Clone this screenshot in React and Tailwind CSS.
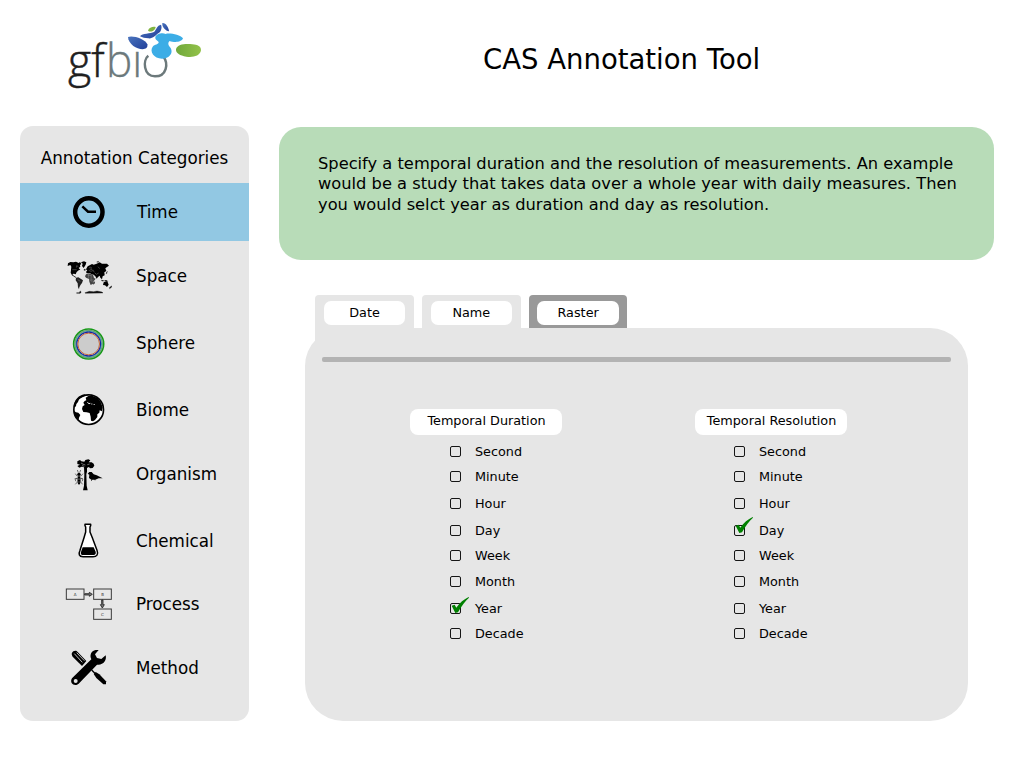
import React from "react";

function Logo() {
  return (
    <svg className="h-20 w-[150px] shrink-0" viewBox="0 0 450 240" aria-label="gfbio">
      <defs>
        <linearGradient id="navy" x1="0" y1="0" x2="1" y2="1">
          <stop offset="0" stopColor="#4a74bd" />
          <stop offset="1" stopColor="#22409a" />
        </linearGradient>
        <linearGradient id="leaf" x1="0" y1="0" x2="1" y2="0">
          <stop offset="0" stopColor="#70a83b" />
          <stop offset="1" stopColor="#93c24a" />
        </linearGradient>
      </defs>
      <g fontFamily="'Open Sans', sans-serif" fontSize="138" fontWeight="300">
        <text x="24" y="186" fill="#1f1f1f" stroke="#1f1f1f" strokeWidth="1.5" textLength="110" lengthAdjust="spacingAndGlyphs">gf</text>
        <text x="138" y="186" fill="#6c797b" stroke="#6c797b" strokeWidth="1" textLength="109" lengthAdjust="spacingAndGlyphs">bı</text>
      </g>
      <path d="M265 122C248 135 250 184 285 184C321 184 325 145 311 126" fill="none" stroke="#6c797b" strokeWidth="7.5" />
      <path d="M204 66C218 60 256 72 262 88C266 108 236 105 220 93C211 86 204 76 204 66Z" fill="url(#navy)" />
      <path d="M264 47C267 36 280 34 287 36C286 47 272 54 264 47Z" fill="#80b440" />
      <path d="M240 64C246 54 272 57 282 51C289 44 291 31 303 29C307 38 303 50 296 54C286 61 278 72 265 70C255 69 247 68 240 64Z" fill="url(#navy)" />
      <path d="M307 24C316 22 326 36 327 49C317 48 305 36 307 24Z" fill="url(#navy)" />
      <path d="M286 66C289 57 306 52 317 57C329 53 361 60 369 70C364 84 340 82 329 78C322 84 325 91 332 99C341 115 327 131 306 131C281 130 268 109 278 95C284 87 296 90 296 81C293 76 285 76 286 66Z" fill="#3cade6" />
      <path d="M348 103C352 87 377 86 397 88C413 89 424 95 423 106C420 124 397 128 379 125C360 122 347 115 348 103Z" fill="url(#leaf)" />
    </svg>
  );
}

function ClockIcon() {
  return (
    <svg className="h-[58px] w-[60px] shrink-0" viewBox="0 -6 180 174">
      <circle cx="83.5" cy="81" r="41" fill="none" stroke="#000" strokeWidth="13.5" />
      <path d="M64 64L81 80H105" fill="none" stroke="#000" strokeWidth="7.5" />
    </svg>
  );
}

function WorldIcon() {
  return (
    <svg className="h-[58px] w-[60px] shrink-0" viewBox="0 -15 180 174">
      <path d="M24 34L31 30L40 31L48 29L56 33L60 30L64 36L60 39L61 44L56 48L61 53L56 55L50 60L47 67L42 65L37 66L41 71L48 75L47 77L36 70L32 62L33 53L34 44L31 39L23 42Z" />
      <path d="M63 31L72 28L79 31L77 38L71 48L66 42L68 35Z" />
      <path d="M48 77L55 76L62 80L69 85L66 93L62 98L58 106L57 112L54 106L53 94L47 85Z" fill="#222" />
      <path d="M78 52L83 43L89 40L96 36L101 38L110 35L119 31L126 35L141 35L147 41L141 45L136 49L139 57L133 61L134 70L128 73L126 82L121 77L119 71L114 75L110 80L106 73L101 68L95 67L89 63L80 64L78 59L82 56Z" />
      <path d="M78 67L87 64L99 68L102 78L107 80L101 88L99 95L92 99L88 89L87 81L78 77L75 73Z" fill="#444" />
      <path d="M131 91L139 87L142 88L146 98L141 105L135 100L129 99ZM123 83L133 86L138 84L145 88L137 87L126 88Z" />
      <path d="M75 122L88 118L101 119L111 117L126 120L129 123L76 124ZM59 119L62 117L63 123L59 123ZM50 122H60V124H50ZM148 107L154 102L156 104L149 110ZM101 91L104 89L103 95L100 97ZM138 64L142 58L140 65ZM72 52H76V55H72ZM110 30L116 28L115 31Z" fill="#111" stroke="#111" strokeWidth="1" />
      <path d="M87 48L92 45L95 48L91 52L97 53M86 55L93 58L100 55L102 60M82 69L94 71M86 65L85 80M94 68L93 84L101 84M89 83L98 90M104 62L109 67L116 63M114 44L119 50M55 44L50 41L49 47M37 53H50M53 83L61 88" fill="none" stroke="#999" strokeWidth="1.2" />
    </svg>
  );
}

function SphereIcon() {
  return (
    <svg className="h-[58px] w-[60px] shrink-0" viewBox="0 -18 180 174">
      <circle cx="86" cy="72" r="45" fill="#ccc" stroke="#169a16" strokeWidth="5" />
      <circle cx="86" cy="72" r="41" fill="none" stroke="#68a477" strokeWidth="4" />
      <circle cx="86" cy="72" r="38" fill="none" stroke="#2a9aa8" strokeWidth="3" />
      <circle cx="86" cy="72" r="35.5" fill="none" stroke="#1d1da4" strokeWidth="3.5" />
      <circle cx="86" cy="72" r="32.5" fill="#ccc" stroke="#c96b38" strokeWidth="3" />
    </svg>
  );
}

function GlobeIcon() {
  return (
    <svg className="h-[58px] w-[60px] shrink-0" viewBox="0 -12 180 174">
      <circle cx="86" cy="74" r="44" fill="#fff" />
      <path d="M41 68C41 45 57 29 76 28L73 34L63 38L57 42L54 51L49 57L48 64ZM41 77L48 82L55 83L61 90L57 98L56 105C47 98 42 88 41 77Z" />
      <path d="M77 38L85 33L98 33L113 39L122 51L128 67L126 79L119 76L118 83L112 88L112 96L105 105L99 109L93 107L92 95L89 84L80 82L70 81L66 72L68 64L74 60L70 53L74 48L79 46Z" />
      <path d="M82 52L87 56L91 55M94 57H97M101 57L104 60" fill="none" stroke="#eee" strokeWidth="3" />
      <circle cx="86" cy="74" r="44.5" fill="none" stroke="#000" strokeWidth="5" />
    </svg>
  );
}

function OrganismIcon() {
  return (
    <svg className="h-[58px] w-[60px] shrink-0" viewBox="0 -15 180 174">
      <path d="M52 34L60 30L64 34L73 35L76 30L85 28L91 31L86 37L95 37L101 41L103 47L98 54L91 55L86 51L81 54V65L79 72L80 107L83 121H69L72 107L73 73L72 52L65 50L58 53L52 48L60 44L52 42Z" />
      <path d="M63 39L70 43L76 45M82 44L89 42M66 47L73 49" fill="none" stroke="#ddd" strokeWidth="1.5" />
      <path d="M83 71L88 66L95 66L101 73L110 76L128 85L116 85L106 89H94L87 84L88 74Z" />
      <path d="M96 87L94 93M104 87L105 91" stroke="#111" strokeWidth="2" />
      <ellipse cx="57" cy="91" rx="4.5" ry="13" />
      <circle cx="57" cy="73" r="5" />
      <path d="M52 60L55 68M62 60L59 68M46 71L51 78H63L69 71M44 86H69M52 83L45 89L48 94M62 83L69 89L66 94M54 94L46 103M60 94L68 103" fill="none" stroke="#333" strokeWidth="2" />
      <path d="M53 88H61M53 96H61" stroke="#bbb" strokeWidth="1" />
    </svg>
  );
}

function FlaskIcon() {
  return (
    <svg className="h-[58px] w-[60px] shrink-0" viewBox="0 -9 180 174">
      <path d="M75 28H92V32L90 36V51L97 68L111 106C116 119 110 125 99 125H69C57 125 55 117 60 106L72 68L77 51V36L75 32Z" fill="#fff" stroke="#000" strokeWidth="4.5" strokeLinejoin="round" />
      <path d="M68 97H101L107 110C109 117 105 120 98 120H70C62 120 61 116 64 108Z" />
    </svg>
  );
}

function ProcessIcon() {
  return (
    <svg className="h-[58px] w-[60px] shrink-0" viewBox="15 -15 180 174">
      <g fill="#e8e8e8" stroke="#3a3a3a" strokeWidth="3">
        <rect x="34" y="27" width="53" height="31" />
        <rect x="116" y="27" width="53" height="31" />
        <rect x="116" y="87" width="53" height="31" />
      </g>
      <path d="M89 41H103V37L112 43L103 49V45H89ZM140 60V74H136L142 84L148 74H144V60Z" fill="#777" stroke="#222" strokeWidth="2.5" />
      <g fontFamily="'DejaVu Sans', sans-serif" fontSize="12" textAnchor="middle" fill="#333">
        <text x="60.500" y="47">A</text>
        <text x="142.500" y="47">B</text>
        <text x="142.500" y="107">C</text>
      </g>
    </svg>
  );
}

function ToolsIcon() {
  return (
    <svg className="h-[58px] w-[60px] shrink-0" viewBox="0 -3 180 174">
      <path d="M38 50C31 41 38 30 50 33L79 63L66 78Z" />
      <path d="M43 41L67 67M50 38L73 62" stroke="#e6e6e6" strokeWidth="2.5" />
      <path d="M95 90L106 101" stroke="#000" strokeWidth="4" />
      <path d="M101 102L107 96L118 103L138 124V133H130L109 114Z" />
      <path d="M36 115L94 58C88 46 93 33 107 30H116L105 43L111 54L124 57L137 46C141 61 129 77 111 74L56 131C44 142 27 129 36 115Z" />
      <circle cx="47" cy="123" r="6" fill="#e6e6e6" />
    </svg>
  );
}

const categories = [
  { label: "Time", Icon: ClockIcon, row: "bg-[#92c8e3] pl-[1px]" },
  { label: "Space", Icon: WorldIcon, row: "mt-1.5" },
  { label: "Sphere", Icon: SphereIcon, row: "mt-[9px]" },
  { label: "Biome", Icon: GlobeIcon, row: "mt-[9px]" },
  { label: "Organism", Icon: OrganismIcon, row: "mt-1.5" },
  { label: "Chemical", Icon: FlaskIcon, row: "mt-[9px]" },
  { label: "Process", Icon: ProcessIcon, row: "mt-[5px]" },
  { label: "Method", Icon: ToolsIcon, row: "mt-1.5" },
];

function Sidebar() {
  return (
    <nav className="h-[595px] w-[229px] shrink-0 overflow-hidden rounded-[13px] bg-[#e6e6e6]">
      <h2 className="flex h-[57px] items-center justify-center pt-[7px] text-[16.75px] leading-5 whitespace-nowrap">
        Annotation Categories
      </h2>
      {categories.map(({ label, Icon, row }) => (
        <div key={label} className={row}>
          <div className="flex h-[58px] items-center gap-4 pl-10">
            <Icon />
            <span className="text-[16.75px] leading-5">{label}</span>
          </div>
        </div>
      ))}
    </nav>
  );
}

const tabs = [
  { label: "Date", style: "h-[50px] bg-[#e6e6e6]" },
  { label: "Name", style: "h-[33px] bg-[#e6e6e6]" },
  { label: "Raster", style: "h-[33px] bg-[#999999]" },
];

const units = [
  { label: "Second", row: "" },
  { label: "Minute", row: "mt-[5px]" },
  { label: "Hour", row: "mt-[7px]" },
  { label: "Day", row: "mt-[7px]" },
  { label: "Week", row: "mt-[5px]" },
  { label: "Month", row: "mt-1.5" },
  { label: "Year", row: "mt-[7px]" },
  { label: "Decade", row: "mt-[5px]" },
];

function UnitList({ title, checked, inset, tick }) {
  return (
    <section className="w-[152px]">
      <h3 className="flex h-[26px] items-center justify-center rounded-[8px] bg-white pb-0.5 pl-px text-[12.8px] leading-4 whitespace-nowrap">
        {title}
      </h3>
      <div className={`pt-[7px] ${inset}`}>
        {units.map(({ label, row }) => (
          <div key={label} className={row}>
            <label className="flex h-5 items-center gap-3.5">
              <span className="relative mb-px size-[11px] rounded-[2px] border border-[#161616]">
                {label === checked && (
                  <svg className={`absolute -left-px h-[17px] w-5 ${tick}`} viewBox="0 0 60 51">
                    <path d="M5 26L14 23L19 32C29 17 42 7 56 0L57 2C46 12 34 28 24 46L16 48Z" fill="#008000" />
                  </svg>
                )}
              </span>
              <span className="text-[12.8px] leading-4">{label}</span>
            </label>
          </div>
        ))}
      </div>
    </section>
  );
}

export default function App() {
  return (
    <div className="h-[768px] w-[1024px] overflow-hidden bg-white font-['DejaVu_Sans',sans-serif] text-black">
      <header className="flex h-[126px] items-start pt-[15px] pl-[60px]">
        <Logo />
        <h1 className="ml-[273px] pt-7 text-[27.5px] leading-8 whitespace-nowrap">CAS Annotation Tool</h1>
      </header>
      <div className="flex items-start gap-[30px] pl-5">
        <Sidebar />
        <main className="w-[715px] pt-px">
          <p className="h-[133px] rounded-[22px] bg-[#b8dcb8] pt-[27px] pl-[39px] text-[16.27px] leading-[20.4px] whitespace-nowrap">
            Specify a temporal duration and the resolution of measurements. An example
            <br />
            would be a study that takes data over a whole year with daily measures. Then
            <br />
            you would selct year as duration and day as resolution.
          </p>
          <div className="mt-[35px] flex h-[33px] items-start gap-[8.3px] pl-[36.3px]">
            {tabs.map(({ label, style }) => (
              <div key={label} className={`${style} w-[98.500px] shrink-0 rounded-t-[4px] px-[8.500px] pt-1.5`}>
                <div className="flex h-6 items-center justify-center rounded-[7px] bg-white text-[12.8px] leading-4">
                  {label}
                </div>
              </div>
            ))}
          </div>
          <div className="ml-[26px] h-[393px] w-[663px] rounded-[38px] bg-[#e6e6e6] pt-[29px]">
            <div className="mx-[17px] h-[5px] rounded-[2px] bg-[#b3b3b3]" />
            <div className="flex gap-[133px] pt-[47px] pl-[105px]">
              <UnitList title="Temporal Duration" checked="Year" inset="pl-10" tick="-top-[7px]" />
              <UnitList title="Temporal Resolution" checked="Day" inset="pl-[39px]" tick="-top-[9px]" />
            </div>
          </div>
        </main>
      </div>
    </div>
  );
}
